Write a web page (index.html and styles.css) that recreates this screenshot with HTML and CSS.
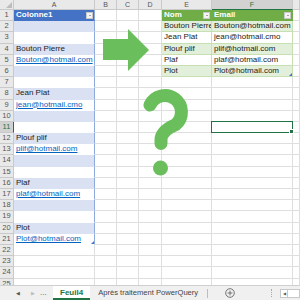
FILE: index.html
```html
<!DOCTYPE html>
<html lang="fr">
<head>
    <meta charset="UTF-8">
    <title>Feuil4</title>
    <link rel="stylesheet" href="styles.css">
</head>
<body>
    <div class="sheet">
        <div class="row head">
            <div class="cell rh corner"></div>
            <div class="cell ca">A</div>
            <div class="cell cb">B</div>
            <div class="cell cc">C</div>
            <div class="cell cd">D</div>
            <div class="cell ce">E</div>
            <div class="cell cf sel">F</div>
            <div class="cell cg"></div>
        </div>
        <div class="row">
            <div class="cell rh">1</div>
            <div class="cell ca blue-h">Colonne1<span class="drop"></span></div>
            <div class="cell cb"></div><div class="cell cc"></div><div class="cell cd"></div>
            <div class="cell ce green-h">Nom<span class="drop"></span></div>
            <div class="cell cf green-h">Email<span class="drop"></span></div>
            <div class="cell cg"></div>
        </div>
        <div class="row">
            <div class="cell rh">2</div>
            <div class="cell ca blue-b"></div>
            <div class="cell cb"></div><div class="cell cc"></div><div class="cell cd"></div>
            <div class="cell ce green-b">Bouton Pierre</div>
            <div class="cell cf green-b">Bouton@hotmail.com</div>
            <div class="cell cg"></div>
        </div>
        <div class="row">
            <div class="cell rh">3</div>
            <div class="cell ca blue-w"></div>
            <div class="cell cb"></div><div class="cell cc"></div><div class="cell cd"></div>
            <div class="cell ce green-w">Jean Plat</div>
            <div class="cell cf green-w">jean@hotmail.cmo</div>
            <div class="cell cg"></div>
        </div>
        <div class="row">
            <div class="cell rh">4</div>
            <div class="cell ca blue-b">Bouton Pierre</div>
            <div class="cell cb"></div><div class="cell cc"></div><div class="cell cd"></div>
            <div class="cell ce green-b">Plouf plif</div>
            <div class="cell cf green-b">plif@hotmail.com</div>
            <div class="cell cg"></div>
        </div>
        <div class="row">
            <div class="cell rh">5</div>
            <div class="cell ca blue-w"><span class="link">Bouton@hotmail.com</span></div>
            <div class="cell cb"></div><div class="cell cc"></div><div class="cell cd"></div>
            <div class="cell ce green-w">Plaf</div>
            <div class="cell cf green-w">plaf@hotmail.com</div>
            <div class="cell cg"></div>
        </div>
        <div class="row">
            <div class="cell rh">6</div>
            <div class="cell ca blue-b"></div>
            <div class="cell cb"></div><div class="cell cc"></div><div class="cell cd"></div>
            <div class="cell ce green-b">Plot</div>
            <div class="cell cf green-b">Plot@hotmail.com<span class="grip"></span></div>
            <div class="cell cg"></div>
        </div>
        <div class="row">
            <div class="cell rh">7</div>
            <div class="cell ca blue-w"></div>
            <div class="cell cb"></div><div class="cell cc"></div><div class="cell cd"></div>
            <div class="cell ce"></div><div class="cell cf"></div><div class="cell cg"></div>
        </div>
        <div class="row">
            <div class="cell rh">8</div>
            <div class="cell ca blue-b">Jean Plat</div>
            <div class="cell cb"></div><div class="cell cc"></div><div class="cell cd"></div>
            <div class="cell ce"></div><div class="cell cf"></div><div class="cell cg"></div>
        </div>
        <div class="row">
            <div class="cell rh">9</div>
            <div class="cell ca blue-w"><span class="link">jean@hotmail.cmo</span></div>
            <div class="cell cb"></div><div class="cell cc"></div><div class="cell cd"></div>
            <div class="cell ce"></div><div class="cell cf"></div><div class="cell cg"></div>
        </div>
        <div class="row">
            <div class="cell rh">10</div>
            <div class="cell ca blue-b"></div>
            <div class="cell cb"></div><div class="cell cc"></div><div class="cell cd"></div>
            <div class="cell ce"></div><div class="cell cf"></div><div class="cell cg"></div>
        </div>
        <div class="row">
            <div class="cell rh sel">11</div>
            <div class="cell ca blue-w"></div>
            <div class="cell cb"></div><div class="cell cc"></div><div class="cell cd"></div>
            <div class="cell ce"></div>
            <div class="cell cf active"><span class="handle"></span></div>
            <div class="cell cg"></div>
        </div>
        <div class="row">
            <div class="cell rh">12</div>
            <div class="cell ca blue-b">Plouf plif</div>
            <div class="cell cb"></div><div class="cell cc"></div><div class="cell cd"></div>
            <div class="cell ce"></div><div class="cell cf"></div><div class="cell cg"></div>
        </div>
        <div class="row">
            <div class="cell rh">13</div>
            <div class="cell ca blue-w"><span class="link">plif@hotmail.com</span></div>
            <div class="cell cb"></div><div class="cell cc"></div><div class="cell cd"></div>
            <div class="cell ce"></div><div class="cell cf"></div><div class="cell cg"></div>
        </div>
        <div class="row">
            <div class="cell rh">14</div>
            <div class="cell ca blue-b"></div>
            <div class="cell cb"></div><div class="cell cc"></div><div class="cell cd"></div>
            <div class="cell ce"></div><div class="cell cf"></div><div class="cell cg"></div>
        </div>
        <div class="row">
            <div class="cell rh">15</div>
            <div class="cell ca blue-w"></div>
            <div class="cell cb"></div><div class="cell cc"></div><div class="cell cd"></div>
            <div class="cell ce"></div><div class="cell cf"></div><div class="cell cg"></div>
        </div>
        <div class="row">
            <div class="cell rh">16</div>
            <div class="cell ca blue-b">Plaf</div>
            <div class="cell cb"></div><div class="cell cc"></div><div class="cell cd"></div>
            <div class="cell ce"></div><div class="cell cf"></div><div class="cell cg"></div>
        </div>
        <div class="row">
            <div class="cell rh">17</div>
            <div class="cell ca blue-w"><span class="link">plaf@hotmail.com</span></div>
            <div class="cell cb"></div><div class="cell cc"></div><div class="cell cd"></div>
            <div class="cell ce"></div><div class="cell cf"></div><div class="cell cg"></div>
        </div>
        <div class="row">
            <div class="cell rh">18</div>
            <div class="cell ca blue-b"></div>
            <div class="cell cb"></div><div class="cell cc"></div><div class="cell cd"></div>
            <div class="cell ce"></div><div class="cell cf"></div><div class="cell cg"></div>
        </div>
        <div class="row">
            <div class="cell rh">19</div>
            <div class="cell ca blue-w"></div>
            <div class="cell cb"></div><div class="cell cc"></div><div class="cell cd"></div>
            <div class="cell ce"></div><div class="cell cf"></div><div class="cell cg"></div>
        </div>
        <div class="row">
            <div class="cell rh">20</div>
            <div class="cell ca blue-b">Plot</div>
            <div class="cell cb"></div><div class="cell cc"></div><div class="cell cd"></div>
            <div class="cell ce"></div><div class="cell cf"></div><div class="cell cg"></div>
        </div>
        <div class="row">
            <div class="cell rh">21</div>
            <div class="cell ca blue-w"><span class="link">Plot@hotmail.com</span><span class="grip"></span></div>
            <div class="cell cb"></div><div class="cell cc"></div><div class="cell cd"></div>
            <div class="cell ce"></div><div class="cell cf"></div><div class="cell cg"></div>
        </div>
        <div class="row">
            <div class="cell rh">22</div>
            <div class="cell ca"></div><div class="cell cb"></div><div class="cell cc"></div><div class="cell cd"></div>
            <div class="cell ce"></div><div class="cell cf"></div><div class="cell cg"></div>
        </div>
        <div class="row">
            <div class="cell rh">23</div>
            <div class="cell ca"></div><div class="cell cb"></div><div class="cell cc"></div><div class="cell cd"></div>
            <div class="cell ce"></div><div class="cell cf"></div><div class="cell cg"></div>
        </div>
        <div class="row">
            <div class="cell rh">24</div>
            <div class="cell ca"></div><div class="cell cb"></div><div class="cell cc"></div><div class="cell cd"></div>
            <div class="cell ce"></div><div class="cell cf"></div><div class="cell cg"></div>
        </div>
        <div class="row">
            <div class="cell rh">25</div>
            <div class="cell ca"></div><div class="cell cb"></div><div class="cell cc"></div><div class="cell cd"></div>
            <div class="cell ce"></div><div class="cell cf"></div><div class="cell cg"></div>
        </div>

        <!-- shapes drawn over the grid -->
        <svg class="shapes" width="300" height="285" viewBox="0 0 300 285">
            <polygon points="103,39 128,39 128,29 149,50 128,71 128,60 103,60" fill="#6abf5c"/>
            <path d="M150 105 A16.5 16.5 0 1 1 175.6 124.6 Q161 131 161 140 L161 143.5" fill="none" stroke="#6abf5c" stroke-width="13" stroke-linecap="round"/>
            <circle cx="160.5" cy="168" r="7.5" fill="#6abf5c"/>
        </svg>
    </div>

    <div class="tabs">
        <span class="nav">&#9664;</span>
        <span class="nav off">&#9654;</span>
        <span class="more">...</span>
        <span class="tab current">Feuil4</span>
        <span class="tab">Après traitement PowerQuery</span>
        <span class="sep"></span>
        <span class="add">
            <svg width="10" height="10" viewBox="0 0 10 10">
                <circle cx="5" cy="5" r="4.3" fill="none" stroke="#666" stroke-width="0.9"/>
                <path d="M5 2.6V7.4M2.6 5H7.4" stroke="#666" stroke-width="0.9"/>
            </svg>
        </span>
        <span class="dots"></span>
        <span class="scroll"><span class="scroll-btn">&#9664;</span><span class="scroll-track"></span></span>
    </div>
</body>
</html>
```

FILE: styles.css
```css
body {
    margin: 0;
    width: 300px;
    height: 300px;
    overflow: hidden;
    background: #fff;
    font-family: "Liberation Sans", Arial, sans-serif;
}
.sheet {
    position: relative;
    height: 285px;
    overflow: hidden;
}
.row {
    display: flex;
    height: 11.2px;
}
.row.head {
    height: 10px;
}
.cell {
    position: relative;
    box-sizing: border-box;
    flex: none;
    height: 100%;
    border-right: 1px solid #dedede;
    border-bottom: 1px solid #dedede;
    padding-left: 2px;
    font-size: 8px;
    line-height: 10.5px;
    color: #222;
    white-space: nowrap;
    overflow: hidden;
}
.rh { width: 14px; }
.ca { width: 81px; }
.cb { width: 22px; }
.cc { width: 22px; }
.cd { width: 23px; }
.ce { width: 50px; }
.cf { width: 81px; }
.cg { flex: 1; }

/* row and column headers */
.head .cell {
    background: #e9e9e9;
    border-color: #c9c9c9;
    color: #555;
    font-size: 7px;
    line-height: 10px;
    text-align: center;
    padding: 0;
}
.rh {
    background: #e9e9e9;
    border-color: #c9c9c9;
    color: #555;
    font-size: 7.5px;
    text-align: center;
    padding: 0;
}
.head .cell.sel {
    background: #d2d2d2;
    color: #217346;
    border-bottom: 1px solid #217346;
}
.rh.sel {
    background: #d2d2d2;
    color: #217346;
    border-right: 1px solid #217346;
}
.corner::after {
    content: "";
    position: absolute;
    right: 1px;
    bottom: 1px;
    border-left: 6px solid transparent;
    border-bottom: 6px solid #bdbdbd;
}

/* blue table in column A */
.blue-h {
    background: #4472c4;
    color: #fff;
    font-weight: bold;
    border-color: #4472c4;
    border-right-color: #8ea9db;
}
.blue-b {
    background: #d9e1f2;
    border-bottom-color: #d9e1f2;
    border-right-color: #8ea9db;
}
.blue-w {
    border-bottom-color: #fff;
    border-right-color: #8ea9db;
}
.link {
    color: #0563c1;
    text-decoration: underline;
}

/* green table in E:F */
.green-h {
    background: #70ad47;
    color: #fff;
    font-weight: bold;
    border-color: #70ad47;
}
.green-b {
    background: #e2efda;
    border-color: #c6e0b4;
}
.green-w {
    border-color: #c6e0b4;
}
.drop {
    position: absolute;
    right: 1px;
    top: 2px;
    width: 7px;
    height: 7px;
    box-sizing: border-box;
    background: #f4f4f4;
    border: 1px solid #c8c8c8;
}
.drop::after {
    content: "";
    position: absolute;
    left: 1.5px;
    top: 2px;
    border-left: 1.5px solid transparent;
    border-right: 1.5px solid transparent;
    border-top: 1.5px solid #555;
}
.grip {
    position: absolute;
    right: 0;
    bottom: 0;
    border-left: 3px solid transparent;
    border-bottom: 3px solid #4472c4;
}

/* selected cell F11 */
.active {
    overflow: visible;
}
.active::before {
    content: "";
    position: absolute;
    left: -1px;
    top: -1px;
    right: -1px;
    bottom: -1px;
    border: 1.5px solid #217346;
}
.handle {
    position: absolute;
    right: -2px;
    bottom: -2px;
    width: 3px;
    height: 3px;
    background: #217346;
    border: 1px solid #fff;
    z-index: 1;
}

.shapes {
    position: absolute;
    left: 0;
    top: 0;
    pointer-events: none;
}

/* sheet tab bar */
.tabs {
    display: flex;
    align-items: center;
    height: 15px;
    box-sizing: border-box;
    background: #f0f0f0;
    border-top: 1px solid #cfcfcf;
    font-size: 8px;
    color: #444;
}
.nav {
    width: 15px;
    text-align: center;
    font-size: 5px;
    color: #555;
}
.nav:first-child {
    margin-left: 10px;
}
.nav.off {
    color: #bbb;
}
.more {
    width: 13px;
    color: #555;
    line-height: 8px;
}
.tab {
    padding: 0 5px 0 8px;
    height: 14px;
    line-height: 13px;
    box-sizing: border-box;
    font-size: 7.6px;
}
.tab.current {
    background: #fff;
    color: #217346;
    font-weight: bold;
    font-size: 8px;
    border-bottom: 2px solid #217346;
    padding: 0 7px;
}
.sep {
    width: 1px;
    height: 9px;
    background: #bdbdbd;
    margin-left: 4px;
}
.add {
    display: flex;
    margin-left: 17px;
}
.dots {
    width: 0;
    height: 8px;
    border-left: 1px dotted #aaa;
    margin-left: 36px;
}
.scroll {
    display: flex;
    align-items: center;
    margin-left: 8px;
    flex: 1;
    height: 9px;
}
.scroll-btn {
    width: 8px;
    height: 9px;
    box-sizing: border-box;
    border: 1px solid #c8c8c8;
    background: #fff;
    font-size: 4px;
    line-height: 7px;
    text-align: center;
    color: #555;
}
.scroll-track {
    flex: 1;
    height: 9px;
    box-sizing: border-box;
    background: #fff;
    border: 1px solid #c8c8c8;
    border-left: none;
}
```
